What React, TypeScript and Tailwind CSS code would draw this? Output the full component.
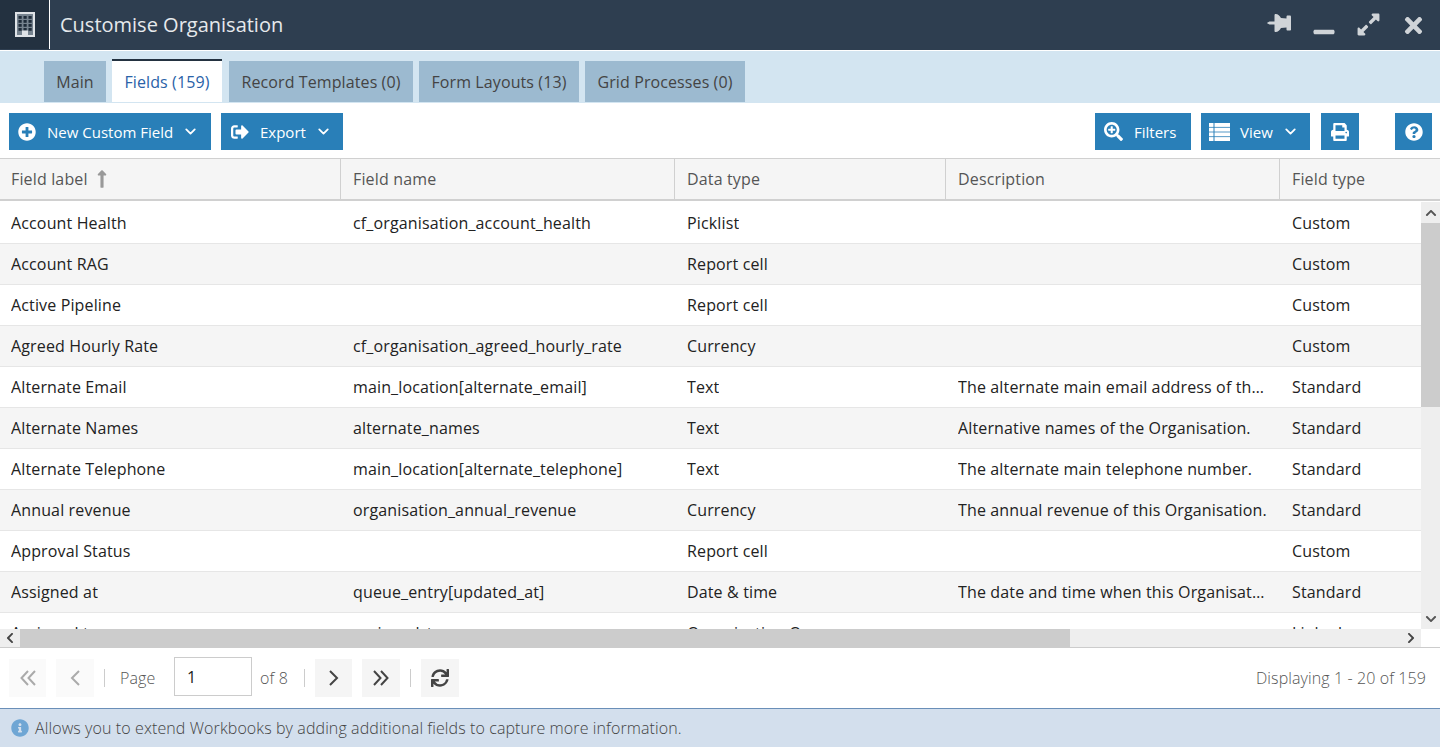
import React from 'react';
import {
  FaChevronDown,
  FaChevronLeft,
  FaChevronRight,
  FaChevronUp,
  FaExpandAlt,
  FaInfoCircle,
  FaLongArrowAltUp,
  FaMinus,
  FaPlusCircle,
  FaPrint,
  FaQuestionCircle,
  FaSearchPlus,
  FaSignOutAlt,
  FaSync,
  FaThumbtack,
  FaTimes,
} from 'react-icons/fa';
import { LuChevronDown } from 'react-icons/lu';

const tabs = [
  { label: 'Main', width: 'w-[62px]' },
  { label: 'Fields (159)', width: 'w-[110px] mr-px', active: true },
  { label: 'Record Templates (0)', width: 'w-[184px]' },
  { label: 'Form Layouts (13)', width: 'w-[160px]' },
  { label: 'Grid Processes (0)', width: 'w-[160px]' },
];

const rows = [
  ['Account Health', 'cf_organisation_account_health', 'Picklist', '', 'Custom'],
  ['Account RAG', '', 'Report cell', '', 'Custom'],
  ['Active Pipeline', '', 'Report cell', '', 'Custom'],
  ['Agreed Hourly Rate', 'cf_organisation_agreed_hourly_rate', 'Currency', '', 'Custom'],
  ['Alternate Email', 'main_location[alternate_email]', 'Text', 'The alternate main email address of this Organisation.', 'Standard'],
  ['Alternate Names', 'alternate_names', 'Text', 'Alternative names of the Organisation.', 'Standard'],
  ['Alternate Telephone', 'main_location[alternate_telephone]', 'Text', 'The alternate main telephone number.', 'Standard'],
  ['Annual revenue', 'organisation_annual_revenue', 'Currency', 'The annual revenue of this Organisation.', 'Standard'],
  ['Approval Status', '', 'Report cell', '', 'Custom'],
  ['Assigned at', 'queue_entry[updated_at]', 'Date & time', 'The date and time when this Organisation was assigned.', 'Standard'],
  ['Assigned to', 'assigned_to', 'Organisation Queue', '', 'Linked'],
];

const columns = ['w-[341px]', 'w-[334px]', 'w-[271px]', 'w-[334px]', 'flex-1'];
const headers = ['Field label', 'Field name', 'Data type', 'Description', 'Field type'];

// the building logo from the title bar, window grid and door
const BuildingIcon = () => (
  <svg width="20" height="25" viewBox="0 0 20 25">
    <rect width="20" height="25" fill="#dfe3e7" />
    <rect x="2" y="2" width="16" height="21" fill="#76838f" />
    {[3, 8, 13].map((x) =>
      [4, 8, 12, 16].map((y) => <rect key={`${x}-${y}`} x={x + 0.5} y={y} width="3.2" height="2.8" fill="#1f2c3a" />),
    )}
    <rect x="7" y="18.5" width="6" height="6.5" fill="#dfe3e7" />
  </svg>
);

const ListIcon = () => (
  <svg width="21" height="18" viewBox="0 0 21 18" fill="#ffffff">
    {[0, 4.7, 9.4, 14.1].map((y) => (
      <g key={y}>
        <rect x="0" y={y} width="4.5" height="3.9" />
        <rect x="5.5" y={y} width="15.5" height="3.9" />
      </g>
    ))}
  </svg>
);

const SingleAngle = ({ flip }: { flip?: boolean }) => (
  <svg width="10" height="16" viewBox="0 0 10 16" fill="none" stroke="currentColor" strokeWidth="2" className={flip ? 'rotate-180' : ''}>
    <polyline points="9,1 2,8 9,15" />
  </svg>
);

const DoubleAngle = ({ flip }: { flip?: boolean }) => (
  <svg width="16" height="16" viewBox="0 0 16 16" fill="none" stroke="currentColor" strokeWidth="2" className={flip ? 'rotate-180' : ''}>
    <polyline points="8,1 1.5,8 8,15" />
    <polyline points="15,1 8.5,8 15,15" />
  </svg>
);

function ToolButton({ icon, label, caret, width }: { icon: React.ReactNode; label?: string; caret?: boolean; width: string }) {
  return (
    <button className={`flex h-[37px] items-center bg-[#297fb8] text-white ${width} ${label ? '' : 'justify-center'}`}>
      {icon}
      {label && <span className="ml-[11px] mt-px text-[15px] leading-none">{label}</span>}
      {caret && <LuChevronDown className="ml-[9px] text-[17px]" strokeWidth={2.5} />}
    </button>
  );
}

function PageButton({ children, className }: { children: React.ReactNode; className: string }) {
  return <button className={`flex h-[38px] items-center justify-center ${className}`}>{children}</button>;
}

const Sep = ({ className }: { className: string }) => <div className={`h-[18px] w-px bg-[#cccccc] ${className}`} />;

export default function App() {
  return (
    <div className="flex h-[747px] w-[1440px] flex-col overflow-hidden bg-white font-['Open_Sans',sans-serif] text-[16px] text-[#222222]">
      <header className="flex h-[51px] shrink-0 items-stretch border-b border-white bg-[#2e3e50] pb-px">
        <div className="flex w-[50px] items-center justify-center border-r border-white bg-[#233140]">
          <BuildingIcon />
        </div>
        <h1 className="ml-[10px] mt-px self-center text-[20px] text-[#e6e9ec]">Customise Organisation</h1>
        <div className="ml-auto mr-[14px] flex items-center text-[#d0d4d8]">
          <FaThumbtack className="mb-[3px] rotate-90 text-[24px]" />
          <FaMinus className="ml-[21px] mt-[15px] text-[24px]" />
          <FaExpandAlt className="ml-[20px] text-[25px]" />
          <FaTimes className="ml-[20px] mt-[2px] text-[25px]" />
        </div>
      </header>

      <nav className="flex h-[52px] shrink-0 items-end gap-[6px] bg-[#d3e5f1] pb-px pl-[44px] tracking-[0.1px]">
        {tabs.map((tab) =>
          tab.active ? (
            <div key={tab.label} className={`flex h-[43px] items-center justify-center border-t-2 border-[#233140] bg-white text-[#2a62a8] ${tab.width}`}>
              {tab.label}
            </div>
          ) : (
            <div key={tab.label} className={`flex h-[41px] items-center justify-center bg-[#9cbad0] text-[#444444] ${tab.width}`}>
              {tab.label}
            </div>
          ),
        )}
      </nav>

      <div className="flex h-[55px] shrink-0 items-start gap-[10px] bg-white px-[9px] pt-[10px]">
        <ToolButton icon={<FaPlusCircle className="ml-[9px] text-[18px]" />} label="New Custom Field" caret width="w-[202px]" />
        <ToolButton icon={<FaSignOutAlt className="ml-[10px] text-[18px]" />} label="Export" caret width="w-[122px]" />
        <div className="ml-auto" />
        <ToolButton icon={<FaSearchPlus className="ml-[9px] text-[19px]" />} label="Filters" width="w-[96px]" />
        <ToolButton icon={<span className="ml-[8px] mr-[-1px] block h-[18px]"><ListIcon /></span>} label="View" caret width="w-[109px]" />
        <div className="ml-px">
          <ToolButton icon={<FaPrint className="text-[18px]" />} width="w-[38px]" />
        </div>
        <div className="ml-[26px] mr-[-1px]">
          <ToolButton icon={<FaQuestionCircle className="text-[18px]" />} width="w-[37px]" />
        </div>
      </div>

      <div className="flex h-[43px] shrink-0 border-b-2 border-t border-[#d0d0d0] bg-[#f5f5f5] tracking-[0.15px] text-[#555555]">
        {headers.map((header, i) => (
          <div key={header} className={`flex items-center ${i === 0 ? 'pl-[11px]' : 'pl-[12px]'} ${columns[i]} ${i < 4 ? 'border-r border-[#d0d0d0]' : ''}`}>
            {header}
            {i === 0 && <FaLongArrowAltUp className="ml-[4px] text-[20px] text-[#999999]" />}
          </div>
        ))}
      </div>

      <div className="flex h-[428px] shrink-0">
        <div className="flex-1 overflow-hidden pt-[2px] tracking-[0.14px]">
          {rows.map((row, r) => (
            <div key={row[0]} className={`flex h-[41px] border-b border-[#e6e6e6] ${r % 2 === 1 ? 'bg-[#f5f5f5]' : 'bg-white'}`}>
              {row.map((cell, c) => (
                <div key={c} className={`flex items-center overflow-hidden ${c === 0 ? 'pl-[11px]' : 'pl-[12px]'} ${columns[c]} ${c === 3 ? 'pr-[12px]' : ''}`}>
                  <span className="truncate">{cell}</span>
                </div>
              ))}
            </div>
          ))}
        </div>
        <div className="mt-px flex w-[19px] flex-col bg-[#eeeeee]">
          <div className="flex h-[21px] items-center justify-center text-[12px] text-[#555555]"><FaChevronUp /></div>
          <div className="h-[184px] bg-[#cccccc]" />
          <div className="flex-1" />
          <div className="flex h-[20px] items-center justify-center text-[12px] text-[#555555]"><FaChevronDown /></div>
        </div>
      </div>

      <div className="flex h-[19px] shrink-0 border-b border-[#cccccc]">
        <div className="flex w-[1421px] bg-[#eeeeee]">
          <div className="flex w-[20px] items-center justify-center text-[12px] text-[#444444]"><FaChevronLeft /></div>
          <div className="w-[1050px] bg-[#cccccc]" />
          <div className="flex-1" />
          <div className="flex w-[20px] items-center justify-center text-[12px] text-[#444444]"><FaChevronRight /></div>
        </div>
      </div>

      <div className="flex h-[60px] shrink-0 items-center whitespace-nowrap bg-white pl-[9px] pr-[14px] font-light tracking-[0.1px] text-[#555555]">
        <PageButton className="w-[37px] bg-[#fafafa] text-[#aaaaaa]"><DoubleAngle /></PageButton>
        <PageButton className="ml-[10px] w-[38px] bg-[#fafafa] text-[#aaaaaa]"><SingleAngle /></PageButton>
        <Sep className="ml-[10px]" />
        <span className="ml-[15px] w-[35px]">Page</span>
        <div className="mb-[3px] ml-[19px] flex h-[39px] w-[78px] items-center border border-[#cccccc] pl-[12px] font-normal text-[#222222]">1</div>
        <span className="ml-[8px] w-[27px]">of 8</span>
        <Sep className="ml-[17px]" />
        <PageButton className="ml-[10px] w-[37px] bg-[#f5f5f5] text-[#444444]"><SingleAngle flip /></PageButton>
        <PageButton className="ml-[10px] w-[38px] bg-[#f5f5f5] text-[#444444]"><DoubleAngle flip /></PageButton>
        <Sep className="ml-[10px]" />
        <PageButton className="ml-[10px] w-[38px] bg-[#f5f5f5] text-[#444444]"><FaSync className="text-[18px]" /></PageButton>
        <span className="ml-auto">Displaying 1 - 20 of 159</span>
      </div>

      <footer className="flex flex-1 items-center border-t border-[#6a8fb8] bg-[#d3dfed] pb-px pl-[11px] font-light tracking-[0.1px] text-[#444444]">
        <FaInfoCircle className="text-[18px] text-[#6fa6d4]" />
        <span className="ml-[6px]">Allows you to extend Workbooks by adding additional fields to capture more information.</span>
      </footer>
    </div>
  );
}
